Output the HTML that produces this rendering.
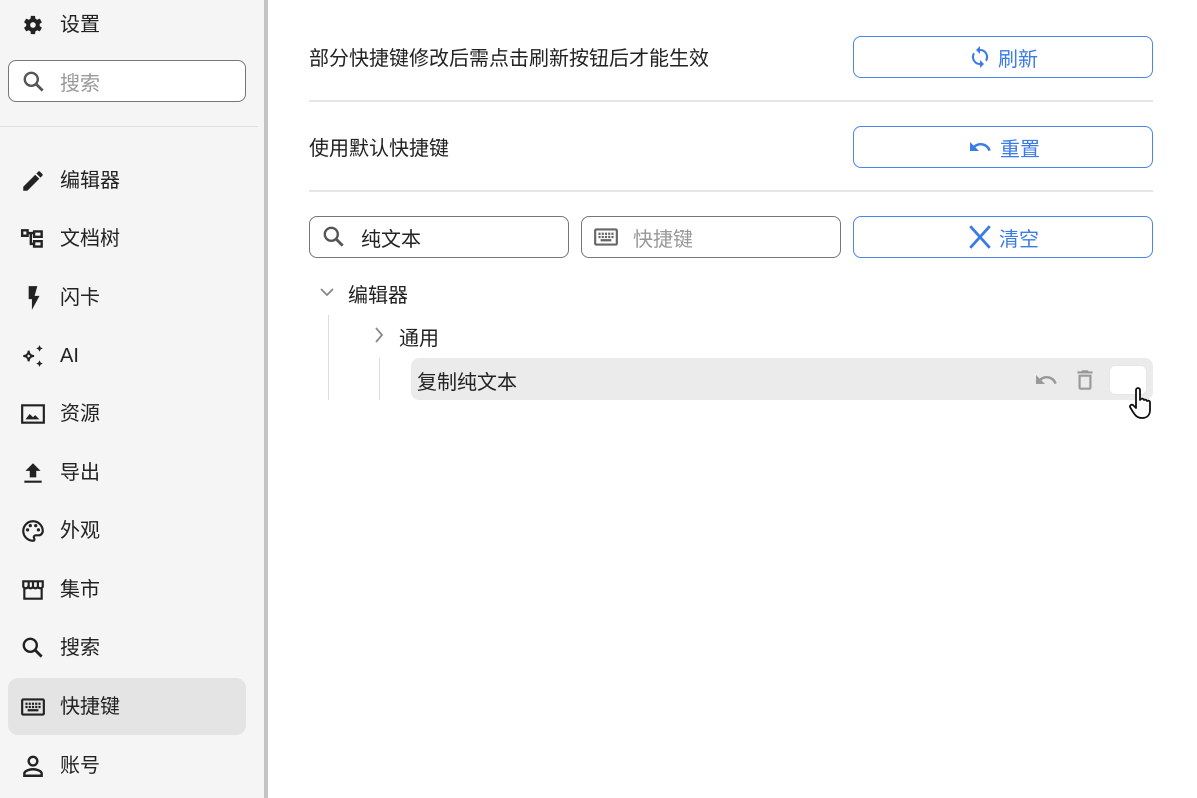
<!DOCTYPE html><html><head><meta charset="utf-8"><style>
*{margin:0;padding:0;box-sizing:border-box}
body{width:1197px;height:798px;overflow:hidden;background:#fff;font-family:"Liberation Sans","Noto Sans CJK SC",sans-serif;color:#222;position:relative}
.sb{position:absolute;left:0;top:0;width:264px;height:798px;background:#f5f5f5}
.bar{position:absolute;left:264px;top:0;width:4px;height:798px;background:#c4c4c4}
.a{position:absolute}
.it{position:absolute;left:8px;width:238px;height:44px;font-size:20px;line-height:44px}
.it span{position:absolute;left:52px;top:0}
.it svg{position:absolute;left:12px;top:9px}
.btn{position:absolute;left:853px;width:300px;height:42px;border:1px solid #4a86e8;border-radius:8px;color:#3b7be6;font-size:20px;display:flex;align-items:center;justify-content:center;gap:6px;background:#fff}
.inp{position:absolute;height:42px;border:1px solid #777;border-radius:8px;top:216px;font-size:20px}
.hr{position:absolute;left:309px;width:844px;height:2px;background:#e6e6e6}
</style></head><body>
<div class="sb"></div><div class="bar"></div>
<div class="it" style="top:3px"><svg width="26" height="26" viewBox="0 0 24 24"><path fill="#222" fill-rule="evenodd" d="M19.14 12.94a7.1 7.1 0 000-1.88l2.03-1.58-1.92-3.32-2.39.96a7 7 0 00-1.62-.94L14.88 3.6h-3.84l-.36 2.58c-.59.24-1.13.56-1.62.94l-2.39-.96-1.92 3.32 2.03 1.58a7.1 7.1 0 000 1.88l-2.03 1.58 1.92 3.32 2.39-.96c.5.38 1.03.7 1.62.94l.36 2.58h3.84l.36-2.58c.59-.24 1.13-.56 1.62-.94l2.39.96 1.92-3.32zM12.96 14.6a2.6 2.6 0 110-5.2 2.6 2.6 0 010 5.2z" transform="translate(-1 0)"/></svg><span>设置</span></div>
<div class="a" style="left:8px;top:60px;width:238px;height:42px;border:1px solid #777;border-radius:8px;background:#fff"><svg class="a" style="left:12px;top:8px" width="26" height="26" viewBox="0 0 24 24"><circle cx="9.5" cy="9.5" r="6" fill="none" stroke="#555" stroke-width="2.2"/><path d="M14 14l6 6" stroke="#555" stroke-width="2.6"/></svg><span class="a" style="left:51px;top:6px;font-size:20px;color:#999">搜索</span></div>
<div class="a" style="left:0;top:126px;width:258px;height:1px;background:#e0e0e0"></div>
<div class="it" style="top:159px"><svg width="26" height="26" viewBox="0 0 24 24"><path fill="#222" d="M3 17.25V21h3.75L17.81 9.94l-3.75-3.75zM20.71 7.04a1 1 0 000-1.41l-2.34-2.34a1 1 0 00-1.41 0l-1.83 1.83 3.75 3.75z"/></svg><span>编辑器</span></div>
<div class="it" style="top:217px"><svg width="26" height="26" viewBox="0 0 24 24"><path fill="none" stroke="#222" stroke-width="2.2" d="M2 4h5v5H2zM13 5h7v5h-7zM13 14h7v5h-7zM7 6.5h6M10 6.5v10h3"/></svg><span>文档树</span></div>
<div class="it" style="top:276px"><svg width="26" height="26" viewBox="0 0 24 24"><path fill="#222" d="M9 1v12h3v10l7-13h-4.5L17 1z" transform="translate(-1 0)"/></svg><span>闪卡</span></div>
<div class="it" style="top:334px"><svg width="26" height="26" viewBox="0 0 24 24"><path fill="none" stroke="#222" stroke-width="1.8" d="M8 7c0 3 2 5 5 5-3 0-5 2-5 5 0-3-2-5-5-5 3 0 5-2 5-5z"/><path fill="#222" d="M18 2l1 2 2 1-2 1-1 2-1-2-2-1 2-1zM18 16l1 2 2 1-2 1-1 2-1-2-2-1 2-1z"/></svg><span>AI</span></div>
<div class="it" style="top:392px"><svg width="26" height="26" viewBox="0 0 24 24"><rect x="2" y="4" width="20" height="16" fill="none" stroke="#222" stroke-width="2"/><path fill="#222" d="M5 17l4-5 3 3 2-2 4 4z"/></svg><span>资源</span></div>
<div class="it" style="top:451px"><svg width="26" height="26" viewBox="0 0 24 24"><path fill="#222" d="M9 16h6v-6h4l-7-7-7 7h4zM4 19h16v2H4z"/></svg><span>导出</span></div>
<div class="it" style="top:509px"><svg width="26" height="26" viewBox="0 0 24 24"><path fill="none" stroke="#222" stroke-width="2" d="M12 3a9 9 0 000 18c1.5 0 1.5-1.5 1-2.5-.7-1.4.3-2.5 1.5-2.5H17a4 4 0 004-4c0-5-4-9-9-9z"/><circle cx="7" cy="11" r="1.5" fill="#222"/><circle cx="9.5" cy="7" r="1.5" fill="#222"/><circle cx="14.5" cy="7" r="1.5" fill="#222"/><circle cx="17" cy="11" r="1.5" fill="#222"/></svg><span>外观</span></div>
<div class="it" style="top:568px"><svg width="26" height="26" viewBox="0 0 24 24"><path fill="none" stroke="#222" stroke-width="2" d="M3 4h18v5a2.5 2.5 0 01-4.5 0 2.5 2.5 0 01-4.5 0 2.5 2.5 0 01-4.5 0A2.5 2.5 0 013 9zM8 4v5M12 4v5M16.5 4v5M4 11v9h16v-9"/></svg><span>集市</span></div>
<div class="it" style="top:626px"><svg width="26" height="26" viewBox="0 0 24 24"><circle cx="9.5" cy="9.5" r="6" fill="none" stroke="#222" stroke-width="2.2"/><path d="M14 14l6 6" stroke="#222" stroke-width="2.6"/></svg><span>搜索</span></div>
<div class="a" style="left:8px;top:678px;width:238px;height:57px;background:#e4e4e4;border-radius:10px"></div>
<div class="it" style="top:685px"><svg width="26" height="26" viewBox="0 0 24 24"><rect x="2" y="5" width="20" height="14" rx="1" fill="none" stroke="#222" stroke-width="2"/><path fill="#222" d="M5 8h2v2H5zM8 8h2v2H8zM11 8h2v2h-2zM14 8h2v2h-2zM17 8h2v2h-2zM5 11h2v2H5zM8 11h2v2H8zM11 11h2v2h-2zM14 11h2v2h-2zM17 11h2v2h-2zM7 14h10v2H7z"/></svg><span>快捷键</span></div>
<div class="it" style="top:744px"><svg width="26" height="26" viewBox="0 0 24 24"><circle cx="12" cy="7.5" r="4" fill="none" stroke="#222" stroke-width="2.2"/><path fill="none" stroke="#222" stroke-width="2.2" d="M4 21v-2c0-2.5 5-4 8-4s8 1.5 8 4v2z"/></svg><span>账号</span></div>

<div class="a" style="left:309px;top:42px;font-size:20px">部分快捷键修改后需点击刷新按钮后才能生效</div>
<div class="btn" style="top:36px"><svg width="24" height="24" viewBox="0 0 24 24"><path fill="#3b7be6" d="M12 4V1L8 5l4 4V6a6 6 0 015.2 9l1.5 1.5A8 8 0 0012 4zm0 14a6 6 0 01-5.2-9L5.3 7.5A8 8 0 0012 20v3l4-4-4-4z"/></svg>刷新</div>
<div class="hr" style="top:100px"></div>
<div class="a" style="left:309px;top:132px;font-size:20px">使用默认快捷键</div>
<div class="btn" style="top:126px"><svg width="28" height="24" viewBox="0 0 24 24"><path fill="#3b7be6" d="M12.5 8c-2.65 0-5.05 1-6.9 2.6L2 7v9h9l-3.6-3.6A8 8 0 0120.3 16l2.4-.8C21.6 11 17.4 8 12.5 8z"/></svg>重置</div>
<div class="hr" style="top:190px"></div>
<div class="inp" style="left:309px;width:260px"><svg class="a" style="left:11px;top:7px" width="26" height="26" viewBox="0 0 24 24"><circle cx="9.5" cy="9.5" r="6" fill="none" stroke="#555" stroke-width="2.2"/><path d="M14 14l6 6" stroke="#555" stroke-width="2.6"/></svg><span class="a" style="left:51px;top:6px">纯文本</span></div>
<div class="inp" style="left:581px;width:260px"><svg class="a" style="left:11px;top:7px" width="26" height="26" viewBox="0 0 24 24"><rect x="2" y="5" width="20" height="14" rx="1" fill="none" stroke="#666" stroke-width="2"/><path fill="#666" d="M5 8h2v2H5zM8 8h2v2H8zM11 8h2v2h-2zM14 8h2v2h-2zM17 8h2v2h-2zM5 11h2v2H5zM8 11h2v2H8zM11 11h2v2h-2zM14 11h2v2h-2zM17 11h2v2h-2zM7 14h10v2H7z"/></svg><span class="a" style="left:51px;top:6px;color:#999">快捷键</span></div>
<div class="btn" style="top:216px"><svg width="26" height="26" viewBox="0 0 24 24"><path stroke="#3b7be6" stroke-width="2.6" d="M3 2l18 20M21 2L3 22"/></svg>清空</div>
<svg class="a" style="left:319px;top:285px" width="16" height="14" viewBox="0 0 16 14"><path d="M2 4l6 6 6-6" fill="none" stroke="#888" stroke-width="1.8"/></svg>
<div class="a" style="left:348px;top:279px;font-size:20px">编辑器</div>
<div class="a" style="left:328px;top:315px;width:1px;height:85px;background:#ddd"></div>
<svg class="a" style="left:372px;top:326px" width="14" height="18" viewBox="0 0 14 18"><path d="M4 2l6 7-6 7" fill="none" stroke="#888" stroke-width="1.8"/></svg>
<div class="a" style="left:399px;top:322px;font-size:20px">通用</div>
<div class="a" style="left:379px;top:358px;width:1px;height:42px;background:#ddd"></div>
<div class="a" style="left:411px;top:358px;width:742px;height:42px;background:#ebebeb;border-radius:8px"></div>
<div class="a" style="left:417px;top:366px;font-size:20px">复制纯文本</div>
<svg class="a" style="left:1033px;top:368px" width="26" height="24" viewBox="0 0 24 24"><path fill="#999" d="M12.5 8c-2.65 0-5.05 1-6.9 2.6L2 7v9h9l-3.6-3.6A8 8 0 0120.3 16l2.4-.8C21.6 11 17.4 8 12.5 8z"/></svg>
<svg class="a" style="left:1072px;top:366px" width="26" height="28" viewBox="0 0 24 24"><path fill="#999" d="M6 19a2 2 0 002 2h8a2 2 0 002-2V7H6zm2-10h8v10H8zM15.5 4l-1-1h-5l-1 1H5v2h14V4z"/></svg>
<div class="a" style="left:1109px;top:365px;width:38px;height:30px;background:#fff;border-radius:6px;border:1px solid #e6e6e6"></div>
<svg class="a" style="left:1128px;top:387px" width="28" height="34" viewBox="0 0 28 34"><path d="M8 3a2 2 0 014 0v10l1-1a2 2 0 013 1 2 2 0 013 1 2 2 0 013 1v8c0 5-3 8-8 8s-7-3-9-6l-3-5a2 2 0 013-2l3 3z" fill="#fff" stroke="#111" stroke-width="1.8" stroke-linejoin="round"/></svg>
</body></html>
